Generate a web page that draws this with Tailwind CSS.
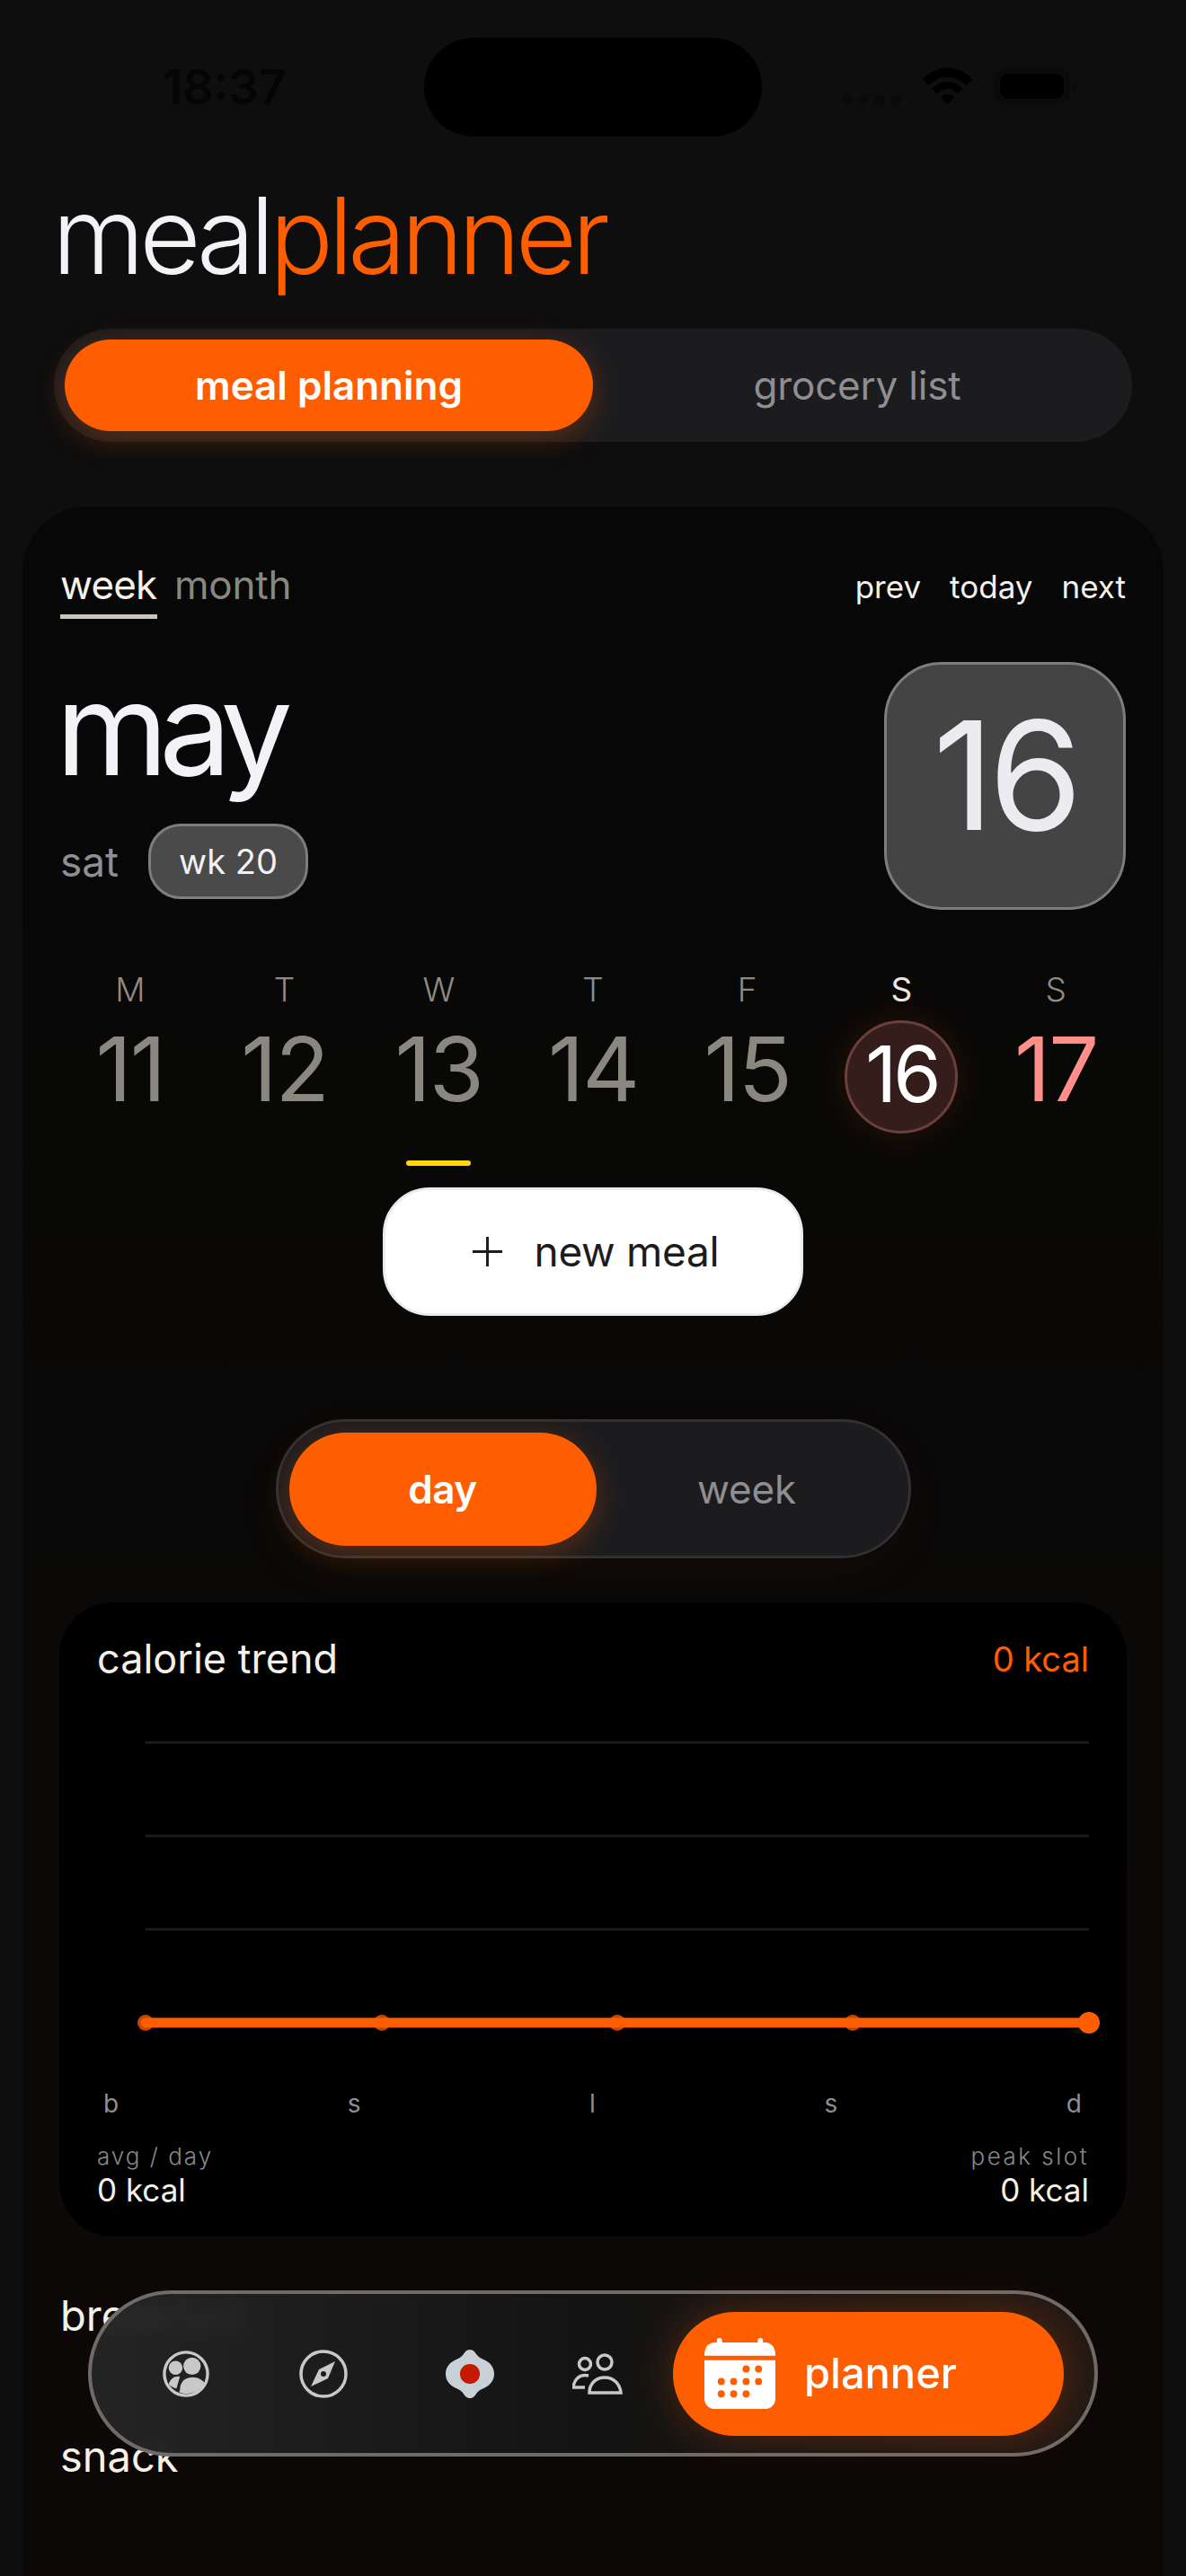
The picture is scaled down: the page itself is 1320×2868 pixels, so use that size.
<!DOCTYPE html>
<html lang="en">
<head>
<meta charset="UTF-8">
<meta name="viewport" content="width=device-width, initial-scale=1.0">
<title>meal planner</title>
<script src="https://cdn.jsdelivr.net/npm/@tailwindcss/browser@4"></script>
</head>
<body class="bg-[#0e0e0e] font-['Inter',sans-serif] text-white">
<div class="relative w-[1320px] h-[2868px] overflow-hidden bg-[#0e0e0e]">

    <!-- status bar -->
    <div class="h-[152px] pt-[42px] flex justify-between">
        <div class="w-[472px] pt-[27px] pl-[181px] text-[53px] leading-[56px] font-semibold text-[#050505]">18:37</div>
        <div class="w-[376px] h-[110px] rounded-[55px] bg-black"></div>
        <div class="w-[472px] pl-[89px] flex items-start">
            <div class="flex gap-[6px] mt-[63px]">
                <span class="w-[12px] h-[12px] rounded-full bg-[#0a0a0a]"></span>
                <span class="w-[12px] h-[12px] rounded-full bg-[#0a0a0a]"></span>
                <span class="w-[12px] h-[12px] rounded-full bg-[#0a0a0a]"></span>
                <span class="w-[12px] h-[12px] rounded-full bg-[#0a0a0a]"></span>
            </div>
            <svg class="ml-[23px] mt-[33px]" width="57" height="42" viewBox="0 0 58 44" fill="#000">
                <path d="M0 14 C16 -4 42 -4 58 14 L51 21 C38 8 20 8 7 21 Z"/>
                <path d="M11 25 C21 14 37 14 47 25 L41 31 C33 23 25 23 17 31 Z"/>
                <path d="M21 35 C26 30 32 30 37 35 L29 43 Z"/>
            </svg>
            <div class="ml-[23px] mt-[33px] w-[85px] h-[42px] rounded-[15px] border-[6px] border-[#0a0a0a] p-[1px]">
                <div class="w-full h-full rounded-[9px] bg-black"></div>
            </div>
            <div class="ml-[3px] mt-[47px] w-[5px] h-[14px] rounded-r-full bg-[#0a0a0a]"></div>
        </div>
    </div>

    <!-- logo -->
    <div class="h-[214px] pt-[39px] pl-[58px] text-[118px] leading-[143px] font-light tracking-[-5.7px]">
        <span class="text-[#f2f2f7]">meal</span><span class="text-[#ff5e00]">planner</span>
    </div>

    <!-- top switch -->
    <div class="mx-[60px] h-[126px] rounded-full bg-[#1c1c1e] p-[12px] flex">
        <div class="w-[588px] h-[102px] rounded-full bg-[#ff5e00] shadow-[0_8px_32px_rgba(255,94,0,0.28)] flex items-center justify-center text-[44px] font-semibold">meal planning</div>
        <div class="flex-1 flex items-center justify-center text-[44px] text-[#8e8e93] tracking-[-0.2px]">grocery list</div>
    </div>

    <!-- main card -->
    <div class="mt-[72px] mx-[25px] h-[2400px] rounded-t-[72px] bg-gradient-to-b from-[#070707] via-[#0a0908] to-[#0d0807] px-[42px] pt-[66px]">

        <div class="flex justify-between h-[59px]">
            <div class="flex gap-[19px] text-[44px] leading-[42px]">
                <div class="h-[59px] w-[108px] border-b-[5px] border-[#c9c5bd] text-[#f5f1e8] tracking-[-0.8px]">week</div>
                <div class="text-[#8a8780] tracking-[-0.2px]">month</div>
            </div>
            <div class="flex gap-[32px] text-[35px] leading-[46px] text-[#f5f1e8]">
                <span>prev</span><span>today</span><span>next</span>
            </div>
        </div>

        <div class="mt-[48px] flex justify-between">
            <div>
                <div class="h-[148px] -ml-[5px] text-[143px] leading-[148px] tracking-[-10px] text-[#f2f2f7]">may</div>
                <div class="mt-[32px] flex items-center gap-[34px]">
                    <span class="w-[64px] text-[46px] text-[#8e8e93] whitespace-nowrap">sat</span>
                    <div class="h-[84px] w-[178px] rounded-[36px] bg-[#4a4a4a] border-[3px] border-[#7d7d7d] flex items-center justify-center text-[38px] text-[#f2f2f7]">wk 20</div>
                </div>
            </div>
            <div class="w-[269px] h-[276px] rounded-[64px] bg-[#444444] border-[3px] border-[#7d7d7d] flex items-center justify-center text-[168px] text-[#ebebf0] tracking-[-6px] pb-[24px]">16</div>
        </div>

        <!-- week strip -->
        <div class="mt-[66px] -mx-[8px] grid grid-cols-7 text-center">
            <div class="flex flex-col items-center"><span class="h-[46px] text-[37px] leading-[46px] font-light text-[#8f8b85]">M</span><span class="h-[116px] mt-[7px] text-[99px] leading-[116px] text-[#8a8680] tracking-[-2px]">11</span></div>
            <div class="flex flex-col items-center"><span class="h-[46px] text-[37px] leading-[46px] font-light text-[#8f8b85]">T</span><span class="h-[116px] mt-[7px] text-[99px] leading-[116px] text-[#8a8680] tracking-[-2px]">12</span></div>
            <div class="flex flex-col items-center"><span class="h-[46px] text-[37px] leading-[46px] font-light text-[#8f8b85]">W</span><span class="h-[116px] mt-[7px] text-[99px] leading-[116px] text-[#8a8680] tracking-[-2px]">13</span><span class="mt-[44px] w-[72px] h-[6px] rounded-full bg-[#ffd60a]"></span></div>
            <div class="flex flex-col items-center"><span class="h-[46px] text-[37px] leading-[46px] font-light text-[#8f8b85]">T</span><span class="h-[116px] mt-[7px] text-[99px] leading-[116px] text-[#8a8680] tracking-[-2px]">14</span></div>
            <div class="flex flex-col items-center"><span class="h-[46px] text-[37px] leading-[46px] font-light text-[#8f8b85]">F</span><span class="h-[116px] mt-[7px] text-[99px] leading-[116px] text-[#8a8680] tracking-[-2px]">15</span></div>
            <div class="flex flex-col items-center"><span class="h-[46px] text-[37px] leading-[46px] text-[#ece8df]">S</span><span class="w-[126px] h-[126px] mt-[11px] pb-[6px] rounded-full bg-[#351d1b] border-[3px] border-[#6b403c] shadow-[0_0_40px_rgba(255,94,0,0.14)] flex items-center justify-center text-[86px] text-white tracking-[-4px]">16</span></div>
            <div class="flex flex-col items-center"><span class="h-[46px] text-[37px] leading-[46px] font-light text-[#8f8b85]">S</span><span class="h-[116px] mt-[7px] text-[99px] leading-[116px] text-[#ff8f88] tracking-[-2px]">17</span></div>
        </div>

        <!-- new meal -->
        <div class="mt-[24px] mx-auto w-[468px] h-[143px] rounded-[52px] bg-white border-[3px] border-[#ececec] pl-[5px] flex items-center justify-center gap-[35px] text-[46px] text-[#1c1c1e]">
            <svg width="35" height="35" viewBox="0 0 36 36" stroke="#1c1c1e" stroke-width="3" fill="none"><path d="M18 1V35M1 18H35"/></svg>
            <span class="tracking-[-0.3px]">new meal</span>
        </div>

        <!-- day / week -->
        <div class="mt-[115px] mx-auto w-[707px] h-[155px] rounded-full bg-[#1c1c1e] border-[3px] border-[#313132] p-[12px] flex shadow-[0_20px_60px_rgba(255,94,0,0.04)]">
            <div class="w-[342px] h-[126px] rounded-full bg-[#ff5e00] shadow-[0_8px_32px_rgba(255,94,0,0.28)] flex items-center justify-center text-[44px] font-semibold tracking-[-0.5px]">day</div>
            <div class="flex-1 flex items-center justify-center text-[44px] text-[#8e8e93] tracking-[-0.2px]">week</div>
        </div>

        <!-- chart card -->
        <div class="mt-[49px] -ml-[1px] w-[1188px] h-[706px] rounded-[60px] bg-black px-[42px] pt-[35px]">
            <div class="flex justify-between items-center h-[56px]">
                <span class="text-[45px] text-[#f5f1e8]">calorie trend</span>
                <span class="text-[38px] text-[#ff5e00]">0 kcal</span>
            </div>
            <div class="mt-[57px] h-[393px]">
                <svg class="block -ml-[42px]" width="1188" height="340" viewBox="0 0 1188 340" fill="none">
                    <defs>
                        <linearGradient id="lineShadow" x1="0" x2="1" y1="0" y2="0">
                            <stop offset="0" stop-color="#1a1a1a" stop-opacity="0"/>
                            <stop offset="1" stop-color="#1a1a1a"/>
                        </linearGradient>
                    </defs>
                    <path d="M96 8H1146M96 112H1146M96 216H1146" stroke="#1b1b1b" stroke-width="3"/>
                    <g fill="#c24800">
                        <circle cx="96" cy="320" r="9"/><circle cx="359" cy="320" r="9"/><circle cx="621" cy="320" r="9"/><circle cx="883" cy="320" r="9"/>
                    </g>
                    <rect x="1120" y="326" width="26" height="6" fill="url(#lineShadow)"/>
                    <path d="M96 320H1146" stroke="#ff5e00" stroke-width="11" stroke-linecap="round"/>
                    <circle cx="1146" cy="320" r="12" fill="#ff5e00"/>
                </svg>
            </div>
            <div class="flex justify-between text-[28px] leading-[34px] text-[#8e8e93] px-[7px] tracking-[1px]">
                <span>b</span><span>s</span><span>l</span><span>s</span><span>d</span>
            </div>
            <div class="mt-[26px] flex justify-between">
                <div><div class="text-[26px] leading-[32px] tracking-[2px] font-light text-[#88888c]">avg / day</div><div class="text-[35px] leading-[42px] text-[#f5f1e8]">0 kcal</div></div>
                <div class="text-right"><div class="text-[26px] leading-[32px] tracking-[2.5px] font-light text-[#88888c]">peak slot</div><div class="text-[35px] leading-[42px] text-[#f5f1e8]">0 kcal</div></div>
            </div>
        </div>

        <div class="mt-[58px] text-[47px] leading-[60px] text-[#f5f1e8]">breakfast</div>
        <div class="mt-[97px] text-[47px] leading-[60px] text-[#f5f1e8]">snack</div>
    </div>

    <!-- floating tab bar -->
    <div class="absolute left-[98px] top-[2550px] w-[1124px] h-[185px] rounded-full border-[4px] border-[#6f6b68] bg-gradient-to-r from-[#262626]/95 via-[#141414]/95 to-[#241a15]/95 backdrop-blur-sm flex items-center pl-[79px]">
        <svg width="52" height="52" viewBox="0 0 54 54">
            <circle cx="27" cy="27" r="25" fill="none" stroke="#c8c8c8" stroke-width="3.5"/>
            <circle cx="15" cy="20" r="8" fill="#c8c8c8"/><circle cx="34" cy="18" r="10" fill="#c8c8c8"/>
            <path d="M7 39C9 32 14 29 20 30L16 44C12 43 9 41 7 39ZM20 46C20 36 26 31 35 31C41 31 46 34 49 38C45 45 37 50 27 50C24 50 21 49 19 48Z" fill="#c8c8c8"/>
        </svg>
        <svg class="ml-[100px]" width="54" height="54" viewBox="0 0 54 54" fill="none">
            <circle cx="27" cy="27" r="25" stroke="#c8c8c8" stroke-width="3.5"/>
            <path d="M40 13L32 32L13 41L22 22Z" fill="#c8c8c8"/>
            <circle cx="27" cy="27" r="3" fill="#1a1a1a"/>
        </svg>
        <svg class="ml-[108px]" width="56" height="54" viewBox="0 0 56 56">
            <path d="M28 0C32 0 34 3 36 6C38 9 41 10 45 12C51 15 56 20 56 28C56 36 51 41 45 44C41 46 38 47 36 50C34 53 32 56 28 56C24 56 22 53 20 50C18 47 15 46 11 44C5 41 0 36 0 28C0 20 5 15 11 12C15 10 18 9 20 6C22 3 24 0 28 0Z" fill="#c8d0d8"/>
            <circle cx="28" cy="28" r="11.5" fill="#c51a00"/>
        </svg>
        <svg class="ml-[86px]" width="60" height="46" viewBox="0 0 60 46" fill="none" stroke="#c8c8c8" stroke-width="3.5">
            <circle cx="14" cy="12" r="6.5"/><circle cx="36" cy="10" r="8"/>
            <path d="M18 25C8 23 2 29 1 38H14"/>
            <path d="M19 44C19 34 26 27 36 27C46 27 53 34 54 44Z"/>
        </svg>
        <div class="ml-[52px] w-[435px] h-[138px] rounded-full bg-[#ff5e00] shadow-[0_0_44px_rgba(255,94,0,0.26)] flex items-center pl-[35px] gap-[32px]">
            <svg width="79" height="79" viewBox="0 0 80 80" fill="#fff">
                <rect x="14" y="0" width="6" height="10" rx="3"/><rect x="60" y="0" width="6" height="10" rx="3"/>
                <path d="M0 19C0 10 5 5 12 5H68C75 5 80 10 80 19V20H0Z"/>
                <path d="M0 25H80V68C80 75 75 80 68 80H12C5 80 0 75 0 68Z"/>
                <g fill="#ff5e00">
                    <circle cx="47" cy="35" r="4"/><circle cx="61" cy="35" r="4"/>
                    <circle cx="19" cy="49" r="4"/><circle cx="33" cy="49" r="4"/><circle cx="47" cy="49" r="4"/><circle cx="61" cy="49" r="4"/>
                    <circle cx="19" cy="63" r="4"/><circle cx="33" cy="63" r="4"/><circle cx="47" cy="63" r="4"/>
                </g>
            </svg>
            <span class="text-[47px] font-medium">planner</span>
        </div>
    </div>
</div>
</body>
</html>
